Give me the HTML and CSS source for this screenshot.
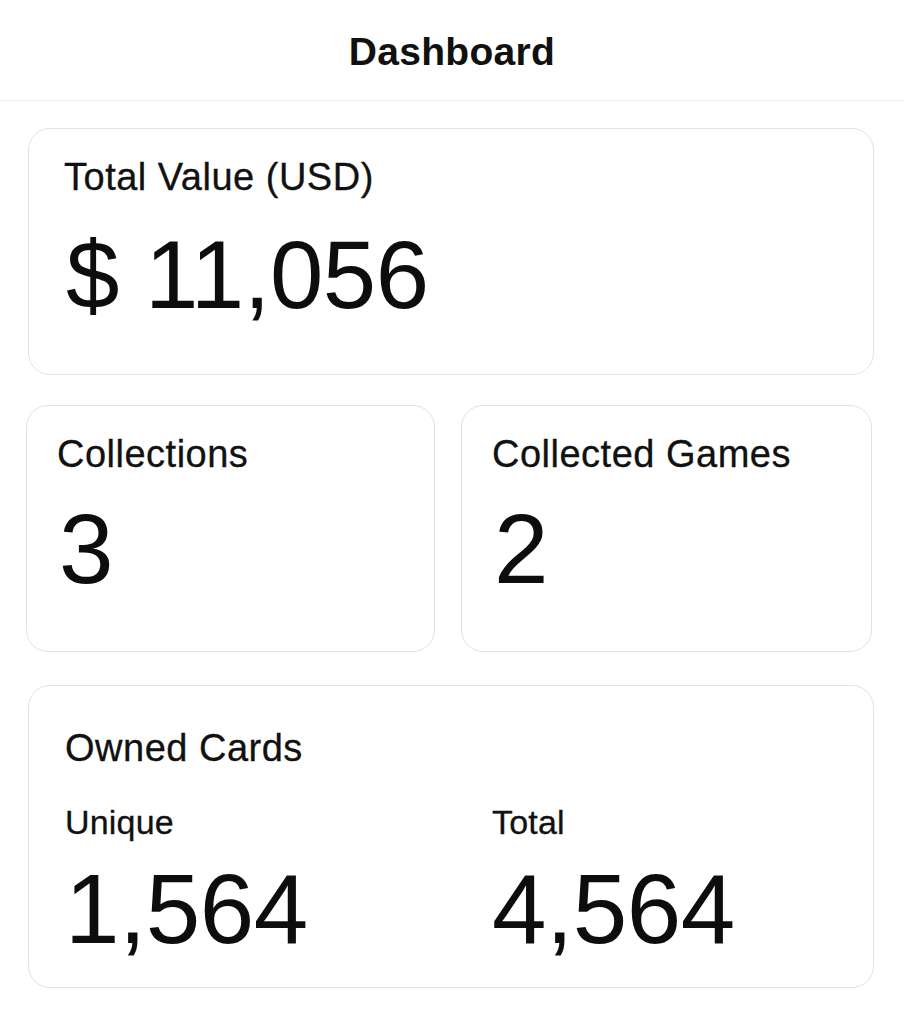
FILE: index.html
```html
<!DOCTYPE html>
<html lang="en">
<head>
<meta charset="utf-8">
<title>Dashboard</title>
<link rel="stylesheet" href="styles.css">
</head>
<body>
  <header class="topbar">
    <h1 class="title">Dashboard</h1>
  </header>
  <main class="content">
    <section class="card card-total">
      <div class="label">Total Value (USD)</div>
      <div class="value">$ 11,056</div>
    </section>
    <div class="row">
      <section class="card card-small">
        <div class="label">Collections</div>
        <div class="value">3</div>
      </section>
      <section class="card card-small">
        <div class="label">Collected Games</div>
        <div class="value">2</div>
      </section>
    </div>
    <section class="card card-owned">
      <div class="label">Owned Cards</div>
      <div class="split">
        <div class="split-col">
          <div class="sublabel">Unique</div>
          <div class="value">1,564</div>
        </div>
        <div class="split-col">
          <div class="sublabel">Total</div>
          <div class="value">4,564</div>
        </div>
      </div>
    </section>
  </main>
</body>
</html>
```

FILE: styles.css
```css
* { box-sizing: border-box; }

html, body {
  margin: 0;
  padding: 0;
  background: #ffffff;
  color: #111111;
  font-family: "Liberation Sans", Arial, Helvetica, sans-serif;
}

.topbar {
  height: 101px;
  padding-top: 29px;
  border-bottom: 1px solid #efefef;
  text-align: center;
}

.title {
  margin: 0;
  font-size: 39px;
  line-height: 45px;
  font-weight: 700;
  letter-spacing: 0.3px;
  color: #111;
}

.content {
  padding: 27px 30px 0 28px;
  display: flex;
  flex-direction: column;
}

.card {
  background: #fff;
  border: 1.5px solid #e2e2e2;
  border-radius: 22px;
}

.label {
  font-size: 38px;
  line-height: 44px;
  letter-spacing: 0.5px;
  color: #111;
  -webkit-text-stroke: 0.3px #111;
}

.value {
  font-size: 96px;
  line-height: 106px;
  color: #0d0d0d;
  letter-spacing: -0.5px;
  margin-left: 2px;
}

.card-total {
  height: 247px;
  padding: 26px 36px 0 35px;
}

.card-total .value {
  margin-top: 23px;
}

.row {
  display: grid;
  grid-template-columns: 409px 411px;
  column-gap: 26px;
  margin: 30px 0 0 -2px;
}

.card-small {
  height: 247px;
  padding: 26px 30px 0 30px;
}

.card-small .value {
  margin-top: 20px;
  font-size: 98px;
}

.card-owned {
  margin-top: 33px;
  height: 303px;
  padding: 40px 30px 0 36px;
}

.split {
  display: grid;
  grid-template-columns: 427px 1fr;
  margin-top: 32px;
}

.sublabel {
  font-size: 34px;
  line-height: 40px;
  letter-spacing: 0.2px;
  color: #111;
  -webkit-text-stroke: 0.3px #111;
}

.split .value {
  margin-top: 14px;
  margin-left: 0;
  font-size: 98px;
}
```
